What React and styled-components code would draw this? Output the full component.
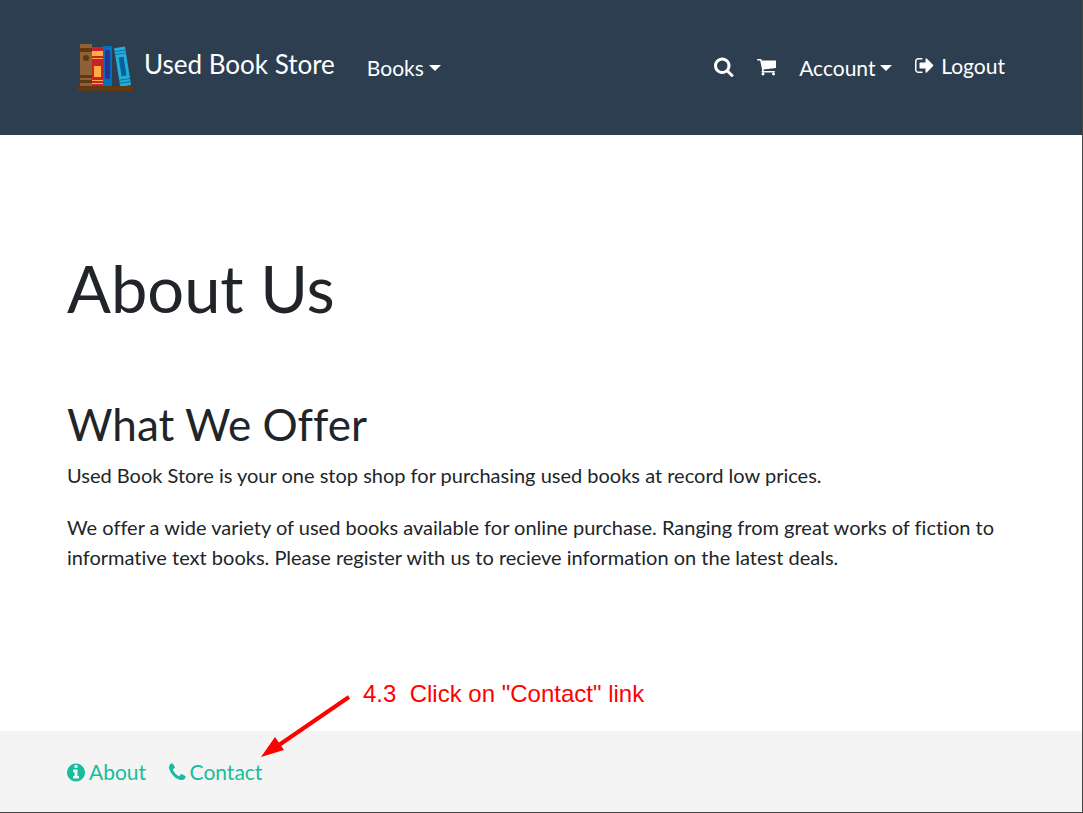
import React from "react";
import styled, { createGlobalStyle } from "styled-components";

const GlobalStyle = createGlobalStyle`
  *, *::before, *::after { box-sizing: border-box; }
  body {
    margin: 0;
    background: #fff;
    color: #212529;
    font-family: Lato, "Liberation Sans", sans-serif;
    font-size: 21px;
    line-height: 30px;
    font-variant-ligatures: none;
  }
`;

const Page = styled.div`
  position: relative;
  display: flex;
  flex-direction: column;
  min-height: 100vh;
  border-right: 1px solid #444;
  border-bottom: 1px solid #444;
`;

const Header = styled.header`
  background: #2c3e50;
  padding: 38px 67px 40px;
`;

const Nav = styled.nav`
  display: flex;
  align-items: center;
  padding: 0 10px;
  min-height: 57px;
`;

const Brand = styled.a`
  display: flex;
  align-items: center;
  gap: 10px;
  margin-right: 32px;
  color: #fff;
  font-size: 26px;
  line-height: 40px;
  text-decoration: none;
`;

const BrandName = styled.span`
  padding-bottom: 6px;
`;

const NavGroup = styled.div`
  display: flex;
  align-items: center;
  gap: 23px;
  margin-left: ${(p) => (p.$end ? "auto" : "0")};
`;

const NavLink = styled.a`
  display: flex;
  align-items: center;
  gap: 7px;
  padding-bottom: ${(p) => (p.$iconOnly ? "0" : "2px")};
  color: #fff;
  text-decoration: none;
`;

const MenuButton = styled.button`
  display: flex;
  align-items: center;
  gap: 5px;
  padding: 2px 0 0;
  border: 0;
  background: none;
  color: #fff;
  font: inherit;
  cursor: pointer;

  &::after {
    content: "";
    border: 6px solid transparent;
    border-top-color: #fff;
    border-bottom: 0;
  }
`;

const Glyph = styled.svg`
  display: block;
  height: 21px;
  fill: currentColor;
`;

const Main = styled.main`
  flex: 1;
  padding: 113px 67px 64px;
`;

const Title = styled.h1`
  margin: 0 0 66px;
  font-size: 65px;
  font-weight: 400;
  line-height: 80px;
`;

const Subtitle = styled.h2`
  margin: 0 0 6px;
  font-size: 44px;
  font-weight: 400;
  line-height: 60px;
`;

const Paragraph = styled.p`
  margin: 0 0 22px;
  font-size: 20px;
`;

const Footer = styled.footer`
  display: flex;
  gap: 23px;
  padding: 26px 67px 25px;
  background: #f4f4f4;
`;

const FooterLink = styled.a`
  display: flex;
  align-items: center;
  gap: 4px;
  color: #18bc9c;
  text-decoration: none;
`;

const Callout = styled.aside`
  position: absolute;
  left: 261px;
  bottom: 54px;
  display: flex;
  align-items: flex-start;
  gap: 12px;
  color: #f00;
  font-family: "Liberation Sans", Arial, sans-serif;
  font-size: 24px;
  line-height: 26px;
  white-space: pre;
  pointer-events: none;
`;

const CalloutText = styled.span`
  margin-top: -14px;
`;

const ICONS = {
  search: {
    box: "64 0 1664 1792",
    d: "M1216 832q0-185-131.5-316.5t-316.5-131.5-316.5 131.5-131.5 316.5 131.5 316.5 316.5 131.5 316.5-131.5 131.5-316.5zm512 832q0 52-38 90t-90 38q-54 0-90-38l-343-342q-179 124-399 124-143 0-273.5-55.5t-225-150-150-225-55.5-273.5 55.5-273.5 150-225 225-150 273.5-55.5 273.5 55.5 225 150 150 225 55.5 273.5q0 220-124 399l343 343q37 37 37 90z",
  },
  cart: {
    box: "64 0 1664 1792",
    d: "M704 1536q0 52-38 90t-90 38-90-38-38-90 38-90 90-38 90 38 38 90zm896 0q0 52-38 90t-90 38-90-38-38-90 38-90 90-38 90 38 38 90zm128-1088v512q0 24-16.5 42.5t-40.5 21.5l-1044 122q13 60 13 70 0 16-24 64h920q26 0 45 19t19 45-19 45-45 19h-1024q-26 0-45-19t-19-45q0-11 8-31.5t16-36 21.5-40 15.5-29.5l-177-823h-204q-26 0-45-19t-19-45 19-45 45-19h256q16 0 28.5 6.5t19.5 15.5 13 24.5 8 26 5.5 29.5 4.5 26h1201q26 0 45 19t19 45z",
  },
  signOut: {
    box: "64 0 1600 1792",
    d: "M704 1440q0 4 1 20t.5 26.5-3 23.5-10 19.5-20.5 6.5h-320q-119 0-203.5-84.5t-84.5-203.5v-704q0-119 84.5-203.5t203.5-84.5h320q13 0 22.5 9.5t9.5 22.5q0 4 1 20t.5 26.5-3 23.5-10 19.5-20.5 6.5h-320q-66 0-113 47t-47 113v704q0 66 47 113t113 47h312l11.5 1 11.5 3 8 5.5 7 9 2 13.5zm928-544q0 26-19 45l-544 544q-19 19-45 19t-45-19-19-45v-288h-448q-26 0-45-19t-19-45v-384q0-26 19-45t45-19h448v-288q0-26 19-45t45-19 45 19l544 544q19 19 19 45z",
  },
  info: {
    box: "128 0 1536 1792",
    d: "M1152 1376v-160q0-14-9-23t-23-9h-96v-512q0-14-9-23t-23-9h-320q-14 0-23 9t-9 23v160q0 14 9 23t23 9h96v320h-96q-14 0-23 9t-9 23v160q0 14 9 23t23 9h448q14 0 23-9t9-23zm-128-896v-192q0-14-9-23t-23-9h-192q-14 0-23 9t-9 23v192q0 14 9 23t23 9h192q14 0 23-9t9-23zm640 416q0 209-103 385.5t-279.5 279.5-385.5 103-385.5-103-279.5-279.5-103-385.5 103-385.5 279.5-279.5 385.5-103 385.5 103 279.5 279.5 103 385.5z",
  },
  phone: {
    box: "192 0 1408 1792",
    d: "M1600 1240q0 27-10 70.5t-21 68.5q-21 50-122 106-94 51-186 51-27 0-53-3.5t-57.5-12.5-47-14.5-55.5-20.5-49-18q-98-35-175-83-127-79-264-216t-216-264q-48-77-83-175-3-9-18-49t-20.5-55.5-14.5-47-12.5-57.5-3.5-53q0-92 51-186 56-101 106-122 25-11 68.5-21t70.5-10q14 0 21 3 18 6 53 76 11 19 30 54t35 63.5 31 53.5q3 4 17.5 25t21.5 35.5 7 28.5q0 20-28.5 50t-62 55-62 53-28.5 46q0 9 5 22.5t8.5 20.5 14 24 11.5 19q76 137 174 235t235 174q2 1 19 11.5t24 14 20.5 8.5 22.5 5q18 0 46-28.5t53-62 55-62 50-28.5q14 0 28.5 7t35.5 21.5 25 17.5q25 15 53.5 31t63.5 35 54 30q70 35 76 53 3 7 3 21z",
  },
};

function Icon({ name }) {
  return (
    <Glyph viewBox={ICONS[name].box} aria-hidden="true">
      <path d={ICONS[name].d} />
    </Glyph>
  );
}

function BooksLogo() {
  return (
    <svg width="57" height="57" viewBox="0 0 57 57" aria-hidden="true">
      <rect x="3" y="6" width="12" height="42" fill="#8f6136" />
      <rect x="3" y="10" width="12" height="4" fill="#603813" />
      <rect x="3" y="37" width="12" height="3" fill="#603813" />
      <rect x="3" y="42" width="12" height="3" fill="#603813" />
      <circle cx="9" cy="20" r="3" fill="#603813" />
      <rect x="15" y="9" width="11" height="39" fill="#c9202b" />
      <rect x="15" y="13" width="11" height="5" fill="#fbb03b" />
      <rect x="15" y="20" width="11" height="1" fill="#fbb03b" />
      <rect x="17" y="28" width="7" height="11" fill="#fbb03b" />
      <rect x="15" y="42" width="11" height="1" fill="#fbb03b" />
      <rect x="15" y="45" width="11" height="1" fill="#fbb03b" />
      <rect x="26" y="8" width="9" height="40" fill="#0071bc" />
      <rect x="28" y="12" width="5" height="29" rx="2" fill="#2e3192" />
      <g transform="rotate(-9 46 28)">
        <rect x="40" y="9" width="11" height="39" fill="#29abd8" />
        <rect x="40" y="12" width="11" height="1" fill="#0071a8" />
        <rect x="40" y="15" width="11" height="1" fill="#0071a8" />
        <rect x="43" y="19" width="5" height="19" fill="#006699" />
        <rect x="40" y="41" width="11" height="1" fill="#0071a8" />
        <rect x="40" y="44" width="11" height="1" fill="#0071a8" />
      </g>
      <rect x="1" y="48" width="55" height="5" fill="#603813" />
    </svg>
  );
}

export default function App() {
  return (
    <>
      <GlobalStyle />
      <Page>
        <Header>
          <Nav aria-label="Main">
            <Brand href="#home">
              <BooksLogo />
              <BrandName>Used Book Store</BrandName>
            </Brand>
            <NavGroup>
              <MenuButton type="button" aria-haspopup="menu">Books</MenuButton>
            </NavGroup>
            <NavGroup $end>
              <NavLink $iconOnly href="#search" aria-label="Search">
                <Icon name="search" />
              </NavLink>
              <NavLink $iconOnly href="#cart" aria-label="Cart">
                <Icon name="cart" />
              </NavLink>
              <MenuButton type="button" aria-haspopup="menu">Account</MenuButton>
              <NavLink href="#logout">
                <Icon name="signOut" />
                Logout
              </NavLink>
            </NavGroup>
          </Nav>
        </Header>
        <Main>
          <Title>About Us</Title>
          <Subtitle>What We Offer</Subtitle>
          <Paragraph>
            Used Book Store is your one stop shop for purchasing used books at record low prices.
          </Paragraph>
          <Paragraph>
            We offer a wide variety of used books available for online purchase. Ranging from great
            works of fiction to informative text books. Please register with us to recieve
            information on the latest deals.
          </Paragraph>
        </Main>
        <Footer>
          <FooterLink href="#about">
            <Icon name="info" />
            About
          </FooterLink>
          <FooterLink href="#contact">
            <Icon name="phone" />
            Contact
          </FooterLink>
        </Footer>
        <Callout>
          <svg width="90" height="63" viewBox="0 0 90 63" aria-hidden="true">
            <path d="M88 2L18 50" stroke="#f00" strokeWidth="4" />
            <path d="M0 62L14 42L23 55Z" fill="#f00" />
          </svg>
          <CalloutText>{'4.3  Click on "Contact" link'}</CalloutText>
        </Callout>
      </Page>
    </>
  );
}
